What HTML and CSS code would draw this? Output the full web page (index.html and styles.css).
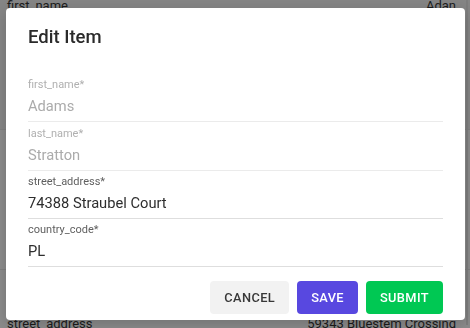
FILE: index.html
```html
<!DOCTYPE html>
<html lang="en">
<head>
    <meta charset="UTF-8">
    <meta name="viewport" content="width=device-width, initial-scale=1.0">
    <title>Edit Item</title>
    <link rel="stylesheet" href="styles.css">
</head>
<body>
    <div class="page">
        <div class="row row-first">
            <span>first_name</span>
            <span>Adan</span>
        </div>
        <div class="row row-second"></div>
        <div class="row row-third">
            <span>street_address</span>
            <span>59343 Bluestem Crossing</span>
        </div>
        <div class="scroll-track"></div>
    </div>

    <div class="overlay">
        <div class="dialog">
            <h2 class="dialog-title">Edit Item</h2>
            <form class="dialog-content">
                <div class="field disabled">
                    <label>first_name*</label>
                    <input type="text" value="Adams" disabled>
                </div>
                <div class="field disabled">
                    <label>last_name*</label>
                    <input type="text" value="Stratton" disabled>
                </div>
                <div class="field">
                    <label>street_address*</label>
                    <input type="text" value="74388 Straubel Court">
                </div>
                <div class="field">
                    <label>country_code*</label>
                    <input type="text" value="PL">
                </div>
            </form>
            <div class="dialog-actions">
                <button class="button button-cancel">Cancel</button>
                <button class="button button-save">Save</button>
                <button class="button button-submit">Submit</button>
            </div>
        </div>
    </div>
</body>
</html>
```

FILE: styles.css
```css
body {
    margin: 0;
    width: 470px;
    height: 328px;
    overflow: hidden;
    font-family: Roboto, "Noto Sans", sans-serif;
    background-color: #8b8b8b;
}

.page {
    position: relative;
    height: 328px;
    color: #1c1c1c;
    font-size: 13px;
}

.row {
    display: flex;
    justify-content: space-between;
    padding: 0 14px 0 7px;
    border-bottom: 1px solid #7f7f7f;
    box-sizing: border-box;
    line-height: 18px;
}

.row-first {
    margin-top: -3px;
    height: 133px;
    background-color: #858585;
}

.row-second {
    height: 140px;
}

.row-third {
    padding-top: 45px;
    border-bottom: none;
}

.scroll-track {
    position: absolute;
    top: 0;
    right: 2px;
    width: 2px;
    height: 100%;
    background-color: #7d7d7d;
}

.overlay {
    position: fixed;
    top: 0;
    left: 0;
    right: 0;
    bottom: 0;
    padding: 8px 5px 0 6px;
}

.dialog {
    background-color: #fff;
    border-radius: 4px;
    box-shadow: 0 4px 14px rgba(0, 0, 0, 0.18);
}

.dialog-title {
    margin: 0;
    padding: 15px 22px 0;
    font-size: 18.5px;
    font-weight: 500;
    line-height: 28px;
    color: #2a2a2a;
}

.dialog-content {
    padding: 23px 22px 0;
    margin: 0;
}

.field {
    margin-top: 3.3px;
    border-bottom: 1px solid #dedede;
}

.field label {
    display: block;
    font-size: 11px;
    line-height: 15px;
    color: #5f5f5f;
}

.field input {
    display: block;
    width: 100%;
    box-sizing: border-box;
    margin: 0;
    padding: 3px 0 4px;
    border: none;
    outline: none;
    background: none;
    font-family: inherit;
    font-size: 14.7px;
    line-height: 22px;
    height: 29px;
    color: #2e2e2e;
}

.field.disabled {
    border-bottom-color: #ebebeb;
}

.field.disabled label {
    color: #b0b0b0;
}

.field.disabled input {
    color: #ababab;
}

.dialog-actions {
    display: flex;
    justify-content: flex-end;
    gap: 8px;
    padding: 14px 22px 6px;
}

.button {
    height: 33px;
    padding: 0 14px;
    border: none;
    border-radius: 4px;
    font-family: inherit;
    font-size: 12.8px;
    font-weight: 500;
    letter-spacing: 0.4px;
    text-transform: uppercase;
    cursor: pointer;
}

.button-cancel {
    background-color: #f2f2f2;
    color: #383838;
}

.button-save {
    background-color: #5848e0;
    color: #fff;
}

.button-submit {
    background-color: #00c853;
    color: #fff;
}
```
